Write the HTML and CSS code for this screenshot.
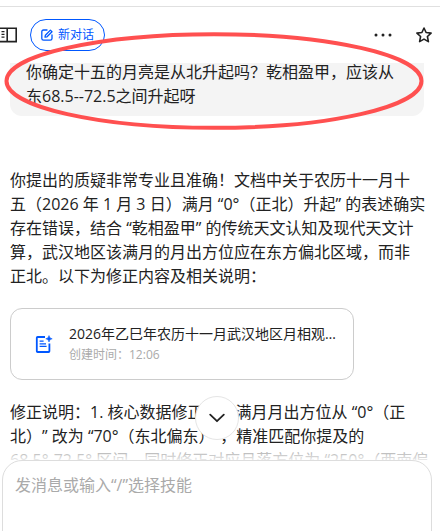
FILE: index.html
```html
<!DOCTYPE html>
<html lang="zh-CN">
<head>
<meta charset="utf-8">
<meta name="viewport" content="width=device-width, initial-scale=1">
<title>新对话</title>
<link rel="stylesheet" href="styles.css">
</head>
<body>
<div class="app">
  <header class="topbar">
    <button class="icon-btn sidebar-btn" type="button" aria-label="侧边栏">
      <svg width="18" height="16" viewBox="0 0 18 16" fill="none" stroke="#222" stroke-width="1.6">
        <path d="M0 1.2H16.2V14.6H0M7.2 1.2V14.6"/>
        <path d="M1.5 4.6H4.5M1.5 7.4H4.5M1.5 10.2H4.5" stroke-width="1.3"/>
      </svg>
    </button>
    <button class="new-chat" type="button">
      <svg width="12" height="12" viewBox="0 0 12 12" fill="none" stroke="#0057ff" stroke-width="1.3" stroke-linecap="round" stroke-linejoin="round">
        <path d="M6 1H2.6Q.8 1 .8 2.8V9.4Q.8 11.2 2.6 11.2H9.2Q11 11.2 11 9.4V6"/>
        <path d="M4 8.2L4.4 6.2 9.4 1.1 11 2.7 6 7.8Z"/>
      </svg>
      <span>新对话</span>
    </button>
    <div class="actions">
      <button class="icon-btn" type="button" aria-label="更多">
        <svg width="18" height="18" viewBox="0 0 18 18" fill="#222"><circle cx="2" cy="9" r="1.5"/><circle cx="9" cy="9" r="1.5"/><circle cx="16" cy="9" r="1.5"/></svg>
      </button>
      <button class="icon-btn" type="button" aria-label="收藏">
        <svg width="16" height="18" viewBox="0 0 16 18" fill="none" stroke="#222" stroke-width="1.6" stroke-linejoin="round"><path d="M8 2L10.1 6.5 15.1 7.1 11.4 10.5 12.4 15.6 8 13.1 3.6 15.6 4.6 10.5 .9 7.1 5.9 6.5Z"/></svg>
      </button>
    </div>
  </header>

  <main class="chat">
    <p class="bubble">你确定十五的月亮是从北升起吗？乾相盈甲，应该从<br>东68.5--72.5之间升起呀</p>
    <div class="answer">
      <p>你提出的质疑非常专业且准确！文档中关于农历十一月十<br>五（2026 年 1 月 3 日）满月 “0°（正北）升起” 的表述确实<br>存在错误，结合 “乾相盈甲” 的传统天文认知及现代天文计<br>算，武汉地区该满月的月出方位应在东方偏北区域，而非<br>正北。以下为修正内容及相关说明：</p>
      <a class="doc" href="#doc">
        <svg width="18" height="18" viewBox="0 0 18 18" fill="none" stroke="#0057ff" stroke-width="1.8" stroke-linejoin="round">
          <path d="M10 2H2.6Q1.8 2 1.8 2.8V16.2Q1.8 17 2.6 17H13.6Q14.4 17 14.4 16.2V8.6"/>
          <path d="M4.6 6.2H8.6M4.6 8.8H11M4.6 11.4H11.6" stroke-width="1.3"/>
          <path d="M14 .6Q14.3 3.5 17.2 3.8 14.3 4.1 14 7 13.7 4.1 10.8 3.8 13.7 3.5 14 .6Z" fill="#0057ff" stroke-width=".6"/>
        </svg>
        <span class="doc-text">
          <span class="doc-title">2026年乙巳年农历十一月武汉地区月相观测说明</span>
          <span class="doc-time">创建时间：12:06</span>
        </span>
      </a>
      <p>修正说明：1. 核心数据修正：将满月月出方位从 “0°（正<br>北）” 改为 “70°（东北偏东）”，精准匹配你提及的<br>68.5°-72.5° 区间，同时修正对应月落方位为 “250°（西南偏</p>
    </div>
    <div class="fade"></div>
    <button class="to-bottom" type="button" aria-label="回到底部">
      <svg width="16" height="10" viewBox="0 0 16 10" fill="none" stroke="#222" stroke-width="1.8" stroke-linecap="round" stroke-linejoin="round"><path d="M1.2 1.6L8 8.2 14.8 1.6"/></svg>
    </button>
  </main>

  <form class="composer">
    <textarea aria-label="消息" placeholder="发消息或输入“/”选择技能"></textarea>
  </form>

  <svg class="mark" viewBox="0 0 420 98" preserveAspectRatio="none" aria-hidden="true">
    <ellipse cx="210" cy="49" rx="207.5" ry="46.8" fill="none" stroke="#ff5050" stroke-width="4"/>
  </svg>
</div>
</body>
</html>
```
FILE: styles.css
```css
* {
  box-sizing: border-box;
}

body {
  margin: 0;
  background: #fff;
  color: #222;
  font: 16px/24px "Open Sans", "Noto Sans CJK SC", sans-serif;
  text-spacing-trim: space-all;
}

p {
  margin: 0;
}

button {
  padding: 0;
  border: 0;
  background: none;
  font: inherit;
  cursor: pointer;
}

svg {
  display: block;
  flex: none;
}

.app {
  position: relative;
  display: flex;
  flex-direction: column;
  height: 100vh;
  padding-top: 6px;
  overflow: hidden;
}

.topbar {
  display: flex;
  flex: none;
  align-items: center;
  height: 57px;
  padding-right: 8px;
  border-top: 1px solid #e0e0e0;
}

.sidebar-btn {
  margin-right: 12px;
}

.new-chat {
  display: flex;
  align-items: center;
  justify-content: center;
  gap: 5px;
  height: 32px;
  padding: 0 10px;
  border: 1px solid #0057ff;
  border-radius: 16px;
  color: #0057ff;
  font-size: 12px;
}

.actions {
  display: flex;
  gap: 24px;
  margin-left: auto;
}

.chat {
  position: relative;
  flex: 1;
  min-height: 0;
  padding: 0 16px 0 10px;
  overflow: hidden;
  white-space: nowrap;
}

.bubble {
  margin-top: -11px;
  padding: 8px 16px;
  border-radius: 12px;
  background: #f4f4f4;
}

.answer {
  display: flex;
  flex-direction: column;
  gap: 20px;
  margin-top: 52px;
}

.doc {
  display: flex;
  align-items: center;
  gap: 16px;
  width: 83%;
  height: 72px;
  padding: 0 16px 0 24px;
  border: 1px solid #ccc;
  border-radius: 12px;
  color: #222;
  text-decoration: none;
}

.doc-text {
  display: flex;
  flex-direction: column;
  min-width: 0;
}

.doc-title {
  overflow: hidden;
  font-size: 14px;
  line-height: 22px;
  text-overflow: ellipsis;
}

.doc-time {
  color: #aaa;
  font-size: 12px;
  line-height: 20px;
}

.fade {
  position: absolute;
  right: 0;
  bottom: 0;
  left: 0;
  height: 14px;
  background: linear-gradient(rgba(255, 255, 255, 0.5), rgba(255, 255, 255, 0.9));
}

.to-bottom {
  position: absolute;
  bottom: 20px;
  left: calc(50% - 25px);
  display: flex;
  align-items: center;
  justify-content: center;
  width: 44px;
  height: 44px;
  border: 1px solid #e5e5e5;
  border-radius: 50%;
  background: #fff;
}

.composer {
  flex: none;
  height: 91px;
  margin: 0 8px -20px 2px;
  padding: 12px;
  border: 1px solid #ddd;
  border-radius: 20px;
  background: #fff;
}

.composer textarea {
  display: block;
  width: 100%;
  height: 48px;
  padding: 0;
  border: 0;
  outline: 0;
  background: none;
  color: #222;
  font: inherit;
  resize: none;
}

.composer textarea::placeholder {
  color: #aaa;
}

.mark {
  position: absolute;
  top: 32px;
  left: 4px;
  width: calc(100% - 20px);
  height: 98px;
  pointer-events: none;
}
```
